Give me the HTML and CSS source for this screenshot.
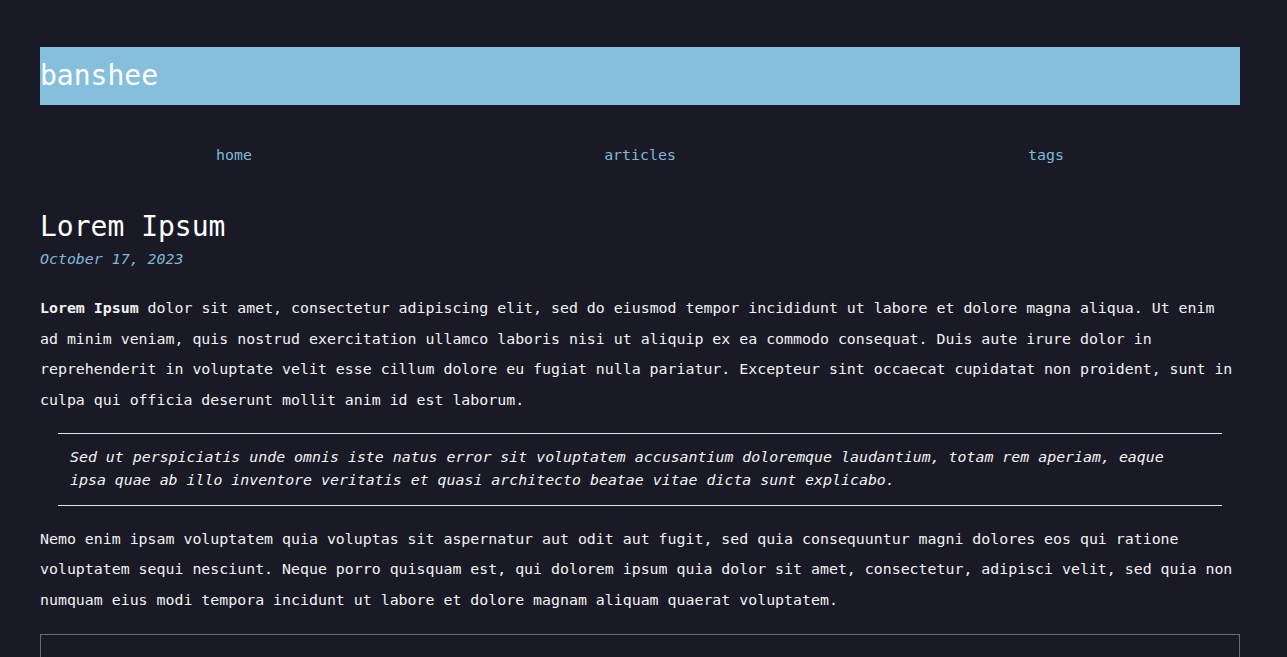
FILE: index.html
```html
<!DOCTYPE html>
<html lang="en">
<head>
<meta charset="utf-8">
<title>banshee</title>
<link rel="stylesheet" href="styles.css">
</head>
<body>
<div class="page">
  <header class="site-header">
    <h1 class="brand">banshee</h1>
  </header>
  <nav class="site-nav">
    <a href="#">home</a>
    <a href="#">articles</a>
    <a href="#">tags</a>
  </nav>
  <article class="post">
    <h1 class="post-title">Lorem Ipsum</h1>
    <p class="post-date">October 17, 2023</p>
    <p class="lead"><strong>Lorem Ipsum</strong> dolor sit amet, consectetur adipiscing elit, sed do eiusmod tempor incididunt ut labore et dolore magna aliqua. Ut enim ad minim veniam, quis nostrud exercitation ullamco laboris nisi ut aliquip ex ea commodo consequat. Duis aute irure dolor in reprehenderit in voluptate velit esse cillum dolore eu fugiat nulla pariatur. Excepteur sint occaecat cupidatat non proident, sunt in culpa qui officia deserunt mollit anim id est laborum.</p>
    <blockquote class="quote">Sed ut perspiciatis unde omnis iste natus error sit voluptatem accusantium doloremque laudantium, totam rem aperiam, eaque ipsa quae ab illo inventore veritatis et quasi architecto beatae vitae dicta sunt explicabo.</blockquote>
    <p class="follow">Nemo enim ipsam voluptatem quia voluptas sit aspernatur aut odit aut fugit, sed quia consequuntur magni dolores eos qui ratione voluptatem sequi nesciunt. Neque porro quisquam est, qui dolorem ipsum quia dolor sit amet, consectetur, adipisci velit, sed quia non numquam eius modi tempora incidunt ut labore et dolore magnam aliquam quaerat voluptatem.</p>
    <pre class="code-block"><code>fn main() {
    println!("Lorem ipsum");
}</code></pre>
  </article>
</div>
</body>
</html>
```
FILE: styles.css
```css
html, body {
  margin: 0;
  padding: 0;
  background: #191a26;
}

body {
  color: #f2f2f2;
  font-family: "DejaVu Sans Mono", "Liberation Mono", monospace;
  font-size: 14.9px;
  line-height: 30.6px;
}

.page {
  padding: 47px 47px 0 40px;
  width: 1200px;
}

.site-header {
  background: #86bfdc;
  height: 58px;
}

.brand {
  margin: 0;
  font-size: 28px;
  font-weight: normal;
  line-height: 58px;
  color: #ffffff;
}

.site-nav {
  display: flex;
  justify-content: space-around;
  margin-top: 35px;
}

.site-nav a {
  color: #7fb9d6;
  text-decoration: none;
}

.post-title {
  margin: 38px 0 0;
  font-size: 28px;
  font-weight: normal;
  line-height: 35px;
  color: #ffffff;
}

.post p {
  margin-top: 0;
  margin-bottom: 18px;
}

.post .post-date {
  margin-bottom: 19px;
  color: #7fb9d6;
  font-style: italic;
}

.post .lead {
  margin-bottom: 17px;
}

.post .follow {
  margin-bottom: 19px;
}

.post strong {
  font-weight: bold;
}

.quote {
  margin: 0 18px 18px;
  padding: 12px 30px 13px 12px;
  border-top: 1px solid #e6e6e6;
  border-bottom: 1px solid #e6e6e6;
  font-style: italic;
  line-height: 23px;
  color: #f2f2f2;
}

.code-block {
  margin: 0;
  padding: 28px 18px;
  border: 1px solid #6c6b7a;
  font-family: "DejaVu Sans Mono", monospace;
  font-size: 14.9px;
  line-height: 23px;
  color: #f2f2f2;
}
```
